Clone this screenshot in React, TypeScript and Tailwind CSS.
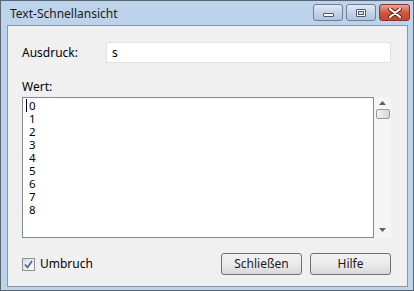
import React from "react";

/**
 * Caption button (minimize / maximize / close)
 */
function CaptionButton({
  kind,
}: {
  kind: "min" | "max" | "close";
}) {
  const isClose = kind === "close";
  return (
    <div
      className={`flex items-center justify-center h-[17px] rounded-[3px] border ${
        isClose
          ? "w-[31px] border-[#7a3a33] bg-gradient-to-b from-[#e8a496] via-[#d4563f] to-[#c2452e]"
          : "w-[30px] border-[#6d7f96] bg-gradient-to-b from-[#e3ebf5] via-[#c4d3e6] to-[#b3c6de]"
      }`}
    >
      {kind === "min" && (
        <div className="mt-[5px] w-[11px] h-[4px] bg-white border border-[#4b5a70] rounded-[1px]" />
      )}
      {kind === "max" && (
        <div className="w-[10px] h-[8px] border border-[#4b5a70] rounded-[1px] bg-white p-[1px] flex">
          <div className="flex-1 border border-[#4b5a70] bg-[#d8e2ef]" />
        </div>
      )}
      {kind === "close" && (
        <svg width="14" height="10" viewBox="0 0 14 10">
          <path
            d="M2 1 L12 9 M12 1 L2 9"
            stroke="#5a1f18"
            strokeWidth="4"
            strokeLinecap="round"
          />
          <path
            d="M2 1 L12 9 M12 1 L2 9"
            stroke="#ffffff"
            strokeWidth="2.2"
            strokeLinecap="round"
          />
        </svg>
      )}
    </div>
  );
}

/**
 * Dialog push button
 */
function PushButton({ label }: { label: string }) {
  return (
    <button className="w-[81px] h-[22px] rounded-[3px] border border-[#707070] bg-gradient-to-b from-[#f2f2f2] via-[#ebebeb] to-[#d8d8d8] text-[12px] text-[#1a1a1a] leading-none">
      {label}
    </button>
  );
}

const lines = ["0", "1", "2", "3", "4", "5", "6", "7", "8"];

export default function App() {
  return (
    <div
      className="w-[414px] h-[291px] flex flex-col border border-[#5a6673] bg-[#bcd3eb] text-[12px] text-black"
      style={{ fontFamily: '"Noto Sans", "Open Sans", sans-serif' }}
    >
      {/* Title bar */}
      <div className="h-[24px] flex items-start shrink-0">
        <span className="ml-[9px] mt-[4px] text-[12px] text-[#1b1b1b]">
          Text-Schnellansicht
        </span>
        <div className="ml-auto mr-[3px] mt-[3px] flex gap-[3px]">
          <CaptionButton kind="min" />
          <CaptionButton kind="max" />
          <CaptionButton kind="close" />
        </div>
      </div>

      {/* Client area */}
      <div className="flex-1 ml-[6px] mr-[5px] mb-[3px] border border-[#8597ab] bg-[#f0f0f0] flex flex-col pl-[14px] pr-[16px]">
        {/* Ausdruck */}
        <div className="mt-[16px] flex items-center h-[21px]">
          <span className="w-[84px]">Ausdruck:</span>
          <div className="flex-1 h-[21px] bg-white border border-[#e2e2e2] flex items-center pl-[5px]">
            s
          </div>
        </div>

        {/* Wert */}
        <div className="mt-[16px] leading-[16px]">Wert:</div>
        <div className="mt-[2px] flex h-[141px]">
          <div className="flex-1 bg-white border border-[#828790] pl-[3px] pt-[1px] text-[11.5px] leading-[13px]">
            {lines.map((l, i) => (
              <div key={l} className="flex h-[13px]">
                <span className={`w-[2px] ${i === 0 ? "border-l border-black" : ""}`} />
                <span className="pl-[1px]">{l}</span>
              </div>
            ))}
          </div>
          <div className="w-[17px] bg-[#f5f5f5] flex flex-col items-center pt-[4px] pb-[6px]">
            <svg width="7" height="4" viewBox="0 0 7 4">
              <path d="M0 4 L3.5 0 L7 4 Z" fill="#5f5f5f" />
            </svg>
            <div className="mt-[4px] w-[14px] h-[10px] rounded-[2px] border border-[#9a9a9a] bg-gradient-to-r from-[#f3f3f3] to-[#d6d6d6]" />
            <svg className="mt-auto" width="7" height="4" viewBox="0 0 7 4">
              <path d="M0 0 L7 0 L3.5 4 Z" fill="#5f5f5f" />
            </svg>
          </div>
        </div>

        {/* Bottom row */}
        <div className="mt-[15px] flex items-center">
          <div className="w-[13px] h-[13px] border border-[#8e8f8f] bg-gradient-to-br from-[#dcdcdc] to-[#fbfbfb] flex items-center justify-center">
            <svg width="9" height="9" viewBox="0 0 9 9">
              <path
                d="M1 4.5 L3.5 7.5 L8 1"
                stroke="#4a5f97"
                strokeWidth="1.6"
                fill="none"
              />
            </svg>
          </div>
          <span className="ml-[5px]">Umbruch</span>
          <div className="ml-auto flex gap-[8px]">
            <PushButton label="Schließen" />
            <PushButton label="Hilfe" />
          </div>
        </div>
      </div>
    </div>
  );
}
